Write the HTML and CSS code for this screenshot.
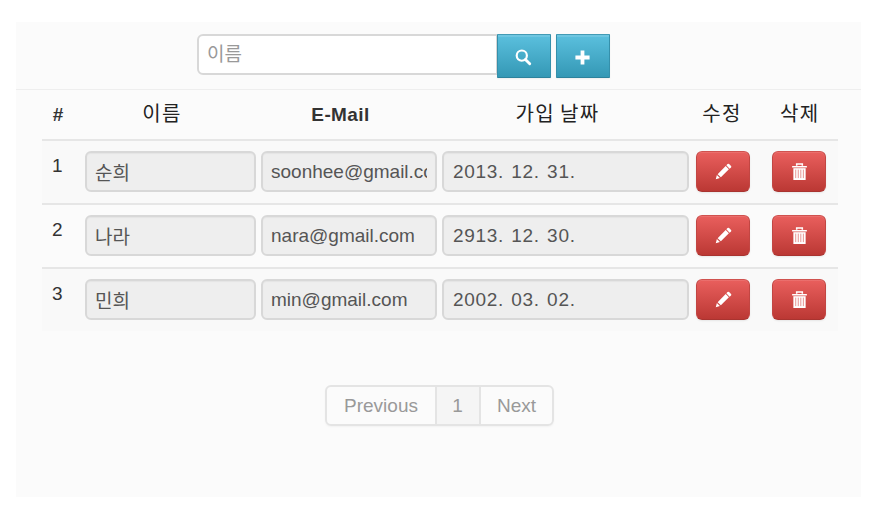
FILE: index.html
```html
<!DOCTYPE html>
<html lang="ko">
<head>
<meta charset="utf-8">
<title>이름</title>
<link rel="stylesheet" href="styles.css">
</head>
<body>
<svg width="0" height="0" class="defs">
  <symbol id="search" viewBox="0 0 18 18"><circle cx="7.2" cy="7" r="5.4" fill="none" stroke="currentColor" stroke-width="2.3"/><path d="M11 11l4.6 4.6" stroke="currentColor" stroke-width="3" stroke-linecap="round"/></symbol>
  <symbol id="plus" viewBox="0 0 18 18"><path d="M7 1.500h4v5.500h5.500v4H11v5.500H7V11H1.500V7H7z" fill="currentColor"/></symbol>
  <symbol id="pencil" viewBox="0 0 18 18"><path d="M.8 17.200L2 12.800l3.200 3.200zM2.800 11.800l8.500-8.500 3.400 3.400L6.200 15.200zM12 2.500l1.300-1.500q.8-.6 1.600 0l2.100 2.100q.6.8 0 1.600L15.500 6z" fill="currentColor"/></symbol>
  <symbol id="trash" viewBox="0 0 18 18"><path d="M6 3V1h6v2M1.200 4h15.600" fill="none" stroke="currentColor" stroke-width="1.600"/><path d="M2.500 5.500h13V18h-13z" fill="currentColor"/><path d="M5 7v9M7.700 7v9M10.400 7v9M13.100 7v9" stroke="#e58f8d" stroke-width="1"/></symbol>
</svg>
<main class="panel">
  <form class="search-bar">
    <input class="field search-field" type="text" placeholder="이름">
    <button class="btn info" type="button"><svg class="icon"><use href="#search"/></svg></button>
    <button class="btn info add" type="button"><svg class="icon"><use href="#plus"/></svg></button>
  </form>
  <section class="table">
    <div class="row head"><span>#</span><span class="ko">이름</span><span>E-Mail</span><span class="ko">가입 날짜</span><span class="ko">수정</span><span class="ko">삭제</span></div>
    <div class="row odd">
      <span class="num">1</span><input class="field" readonly value="순희"><input class="field" readonly value="soonhee@gmail.com"><input class="field date" readonly value="2013. 12. 31.">
      <button class="btn danger" type="button"><svg class="icon"><use href="#pencil"/></svg></button><button class="btn danger" type="button"><svg class="icon"><use href="#trash"/></svg></button>
    </div>
    <div class="row">
      <span class="num">2</span><input class="field" readonly value="나라"><input class="field" readonly value="nara@gmail.com"><input class="field date" readonly value="2913. 12. 30.">
      <button class="btn danger" type="button"><svg class="icon"><use href="#pencil"/></svg></button><button class="btn danger" type="button"><svg class="icon"><use href="#trash"/></svg></button>
    </div>
    <div class="row odd">
      <span class="num">3</span><input class="field" readonly value="민희"><input class="field" readonly value="min@gmail.com"><input class="field date" readonly value="2002. 03. 02.">
      <button class="btn danger" type="button"><svg class="icon"><use href="#pencil"/></svg></button><button class="btn danger" type="button"><svg class="icon"><use href="#trash"/></svg></button>
    </div>
  </section>
  <nav class="pager"><span>Previous</span><span class="current">1</span><span>Next</span></nav>
</main>
</body>
</html>
```
FILE: styles.css
```css
* { box-sizing: border-box; }
body { margin: 0; padding: 22px 11px 0 16px; background: #fff; color: #333; font: 19px/27px "Liberation Sans", "Noto Sans CJK KR", sans-serif; }
.defs { position: absolute; }
.panel { height: 475px; background: #fbfbfb; overflow: hidden; }
.search-bar { display: flex; height: 68px; padding: 12px 0 0 181px; border-bottom: 1px solid #eee; }
.field { display: block; min-width: 0; width: 100%; height: 41px; margin: 0; padding: 0 8px; border: 2px solid #d8d8d8; border-radius: 6px; background: #eee; box-shadow: inset 0 1px 1px rgba(0,0,0,.04); color: #555; font: inherit; outline: none; }
.search-field { width: 300px; border-right-width: 1px; border-radius: 6px 0 0 6px; background: #fff; box-shadow: none; }
.search-field::placeholder { color: #999; opacity: 1; }
.btn { display: flex; align-items: center; justify-content: center; width: 54px; height: 41px; margin: 0; padding: 0; border: 1px solid; border-radius: 6px; color: #fff; }
.icon { width: 17px; height: 17px; overflow: visible; }
.info { height: 44px; border-radius: 1px; border-color: #439bb5 #3590ab #2c829c; background: linear-gradient(#5bc0de, #3498b5); box-shadow: inset 0 2px 0 rgba(255,255,255,.12), 0 1px 2px rgba(0,0,0,.06); }
.info .icon { margin: 3px 1px 0 0; }
.info.add { margin-left: 5px; }
.danger { border-color: #d0524f #c24643 #a93430; background: linear-gradient(#e95f5d, #bb3834); box-shadow: inset 0 1px 0 rgba(255,255,255,.1), 0 1px 2px rgba(0,0,0,.08); }
.table { width: 796px; margin-left: 26px; }
.row { display: grid; grid-template-columns: 38px 171px 176px 247px 54px 55px; column-gap: 5px; height: 64px; padding-top: 10px; border-top: 2px solid #e6e6e6; }
.row > :nth-child(3), .row > :nth-child(4) { position: relative; }
.row > :nth-child(5) { margin-left: 2px; }
.row > :nth-child(6) { margin-left: 19px; }
.row.odd { background: #f9f9f9; }
.row.head { height: 49px; padding-top: 11px; border: 0; text-align: center; font-weight: 700; }
.row.head > :first-child { padding-right: 6px; }
.row.head > :nth-child(2) { padding-right: 17px; }
.row.head > :nth-child(3) { padding-right: 17px; letter-spacing: .4px; }
.row.head > :nth-child(4) { padding-right: 16px; }
.row.head > :nth-child(6) { margin-left: 27px; }
.ko { white-space: nowrap; font-weight: 400; color: #222; font-size: 20px; letter-spacing: 1.4px; word-spacing: -2px; }
.num { padding: 1px 0 0 10px; }
.date { padding-left: 9px; letter-spacing: .7px; word-spacing: 1.3px; }
.pager { display: flex; width: 229px; height: 41px; margin: 54px 0 0 309px; border: 2px solid #e4e4e4; border-radius: 6px; box-shadow: 0 1px 2px rgba(0,0,0,.04); color: #999; line-height: 37px; text-align: center; }
.pager span { flex: 1; }
.pager span:first-child { flex: 0 0 108px; }
.pager .current { flex: 0 0 46px; padding-right: 1px; border: solid #e4e4e4; border-width: 0 2px; background: #f5f5f5; }
```
